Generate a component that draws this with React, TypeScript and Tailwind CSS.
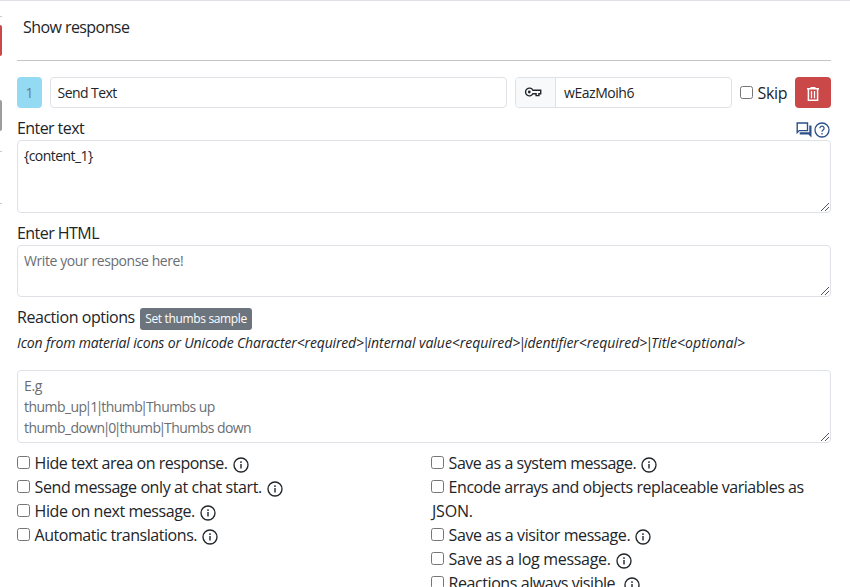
import React from "react";

function Grip() {
  return (
    <svg className="absolute right-[1px] bottom-0" width="9" height="9" viewBox="0 0 9 9" shapeRendering="crispEdges">
      <path d="M0.5 8.5L8.5 0.5M4.5 8.5L8.5 4.5" stroke="#555" strokeWidth="1" fill="none" />
    </svg>
  );
}

function Area({ className, children }: { className: string; children: React.ReactNode }) {
  return (
    <div className={`relative rounded-[4px] border border-[#dee2e6] px-[6px] text-[14px] leading-[21px] ${className}`}>
      {children}
      <Grip />
    </div>
  );
}

function Box() {
  return <span className="inline-block h-[13px] w-[13px] shrink-0 rounded-[2.5px] border border-[#767676] bg-white" />;
}

function Pipe() {
  return <span className="-mx-[2px] tracking-normal">|</span>;
}

function InfoIcon() {
  return (
    <svg className="mt-[5px] ml-[4px] shrink-0" width="18" height="18" viewBox="0 0 18 18" fill="none" stroke="currentColor">
      <circle cx="9" cy="9" r="7" strokeWidth="1.35" />
      <path d="M9 8V12.6M9 5.3V6.9" strokeWidth="1.4" />
    </svg>
  );
}

function HelpIcon() {
  return (
    <svg width="18" height="18" viewBox="0 0 18 18" fill="none" stroke="currentColor">
      <circle cx="9" cy="9" r="7" strokeWidth="1.3" />
      <path d="M6.9 7.2a2.1 2.1 0 1 1 3.5 1.5C9.6 9.3 9 9.7 9 10.8M9 12v1.4" strokeWidth="1.25" />
    </svg>
  );
}

function ForumIcon() {
  return (
    <svg width="18" height="18" viewBox="0 0 18 18" fill="none" stroke="currentColor">
      <path d="M2.2 11.6V2h10.3v7.6H4.2z" strokeWidth="1.4" />
      <path d="M14.3 4.5h2.2v12l-3-3H4.7v-2.2h9.6z" fill="currentColor" stroke="none" />
    </svg>
  );
}

function KeyIcon() {
  return (
    <svg width="18" height="18" viewBox="0 0 18 18" fill="none" stroke="currentColor">
      <path d="M8.9 7.2A3.9 3.9 0 1 0 8.9 10.8H12.1V12.6H14.9V10.8H16.7V7.2z" strokeWidth="1.4" />
      <circle cx="5.3" cy="9" r="1.4" fill="currentColor" stroke="none" />
    </svg>
  );
}

function Option({ label, spacing, info = true }: { label: string; spacing: string; info?: boolean }) {
  return (
    <div className="flex h-[24px] items-start whitespace-nowrap">
      <span className="mt-[5px] mr-[4.6px] flex"><Box /></span>
      <span className={spacing}>{label}</span>
      {info && <InfoIcon />}
    </div>
  );
}

export default function App() {
  return (
    <div className="flex h-[587px] w-[850px] overflow-hidden border-t border-[#dee2e6] bg-white font-['Open_Sans','Noto_Sans',sans-serif] text-[16px] leading-[24px] text-[#212529]">
      <div className="flex w-[2px] shrink-0 flex-col">
        <div className="mt-[15px] h-px bg-[#c8c9ca]" />
        <div className="mt-[8px] h-[31px] rounded-r-[3px] bg-[#cb4848]" />
        <div className="mt-[44px] h-[31px] rounded-r-[3px] bg-[#999da0]" />
        <div className="mt-[20px] h-px bg-[#c8c9ca]" />
        <div className="mt-[51px] h-px bg-[#c8c9ca]" />
      </div>
      <div className="ml-[15px] w-[814px] shrink-0">
        <div className="h-[60px] border-b border-[#c4c5c6] pt-[14px] pl-[6px]">
          <span className="tracking-[-0.57px]">Show response</span>
        </div>
        <div className="mt-[16px] flex h-[31px] text-[14px]">
          <div className="flex w-[25px] items-center justify-center rounded-[4px] bg-[#94daf3] pt-px text-[#687d86]">1</div>
          <div className="ml-[8px] flex w-[457px] items-center rounded-[4px] border border-[#dee2e6] pl-[6.5px]">
            <span className="tracking-[-0.55px]">Send Text</span>
          </div>
          <div className="ml-[8px] flex w-[217px] rounded-[4px] border border-[#dee2e6]">
            <div className="flex w-[40px] items-center rounded-l-[3px] border-r border-[#dee2e6] bg-[#f8f9fa] pb-px pl-[8px]">
              <KeyIcon />
            </div>
            <div className="flex items-center pl-[8px] tracking-[-0.45px]">wEazMoih6</div>
          </div>
          <div className="ml-[8px] flex w-[55px] pt-[4px] text-[16px]">
            <span className="mt-[5px] mr-[4.5px] flex"><Box /></span>
            <span className="tracking-[-0.3px]">Skip</span>
          </div>
          <div className="flex w-[36px] items-center justify-center rounded-[4px] bg-[#cb4848] pt-[2px]">
            <svg width="14" height="16" viewBox="0 0 14 16" fill="none" stroke="#fff">
              <path d="M1 2.8h12M4.5 1.6h5" strokeWidth="1.4" />
              <path d="M2.4 3v11.2h9.2V3" strokeWidth="1.5" />
              <path d="M5.5 5v7.2M8.5 5v7.2" strokeWidth="1.3" />
            </svg>
          </div>
        </div>
        <div className="mt-[8px] flex h-[24px] justify-between">
          <span className="tracking-[-0.58px]">Enter text</span>
          <span className="flex pt-[5px] text-[#2b5189]">
            <ForumIcon />
            <HelpIcon />
          </span>
        </div>
        <Area className="h-[73px] pt-[4px]"><span className="tracking-[-0.55px]">{"{content_1}"}</span></Area>
        <div className="mt-[8px] h-[24px]"><span className="tracking-[-0.55px]">Enter HTML</span></div>
        <Area className="h-[52px] pt-[4px] text-[#6a6e72]"><span className="tracking-[-0.42px]">Write your response here!</span></Area>
        <div className="mt-[8px] flex h-[26px]">
          <span className="tracking-[-0.45px]">Reaction options</span>
          <span className="mt-[3px] ml-[5.3px] flex h-[22px] w-[112px] items-center justify-center rounded-[3px] bg-[#6c757d] text-[12px] tracking-[-0.35px] whitespace-nowrap text-white">Set thumbs sample</span>
        </div>
        <div className="h-[39px] text-[14px] whitespace-nowrap italic">
          <span className="tracking-[-0.16px]">{"Icon from material icons or Unicode Character<required>"}</span>
          <Pipe />
          <span className="tracking-[-0.04px]">{"internal value<required>"}</span>
          <Pipe />
          <span className="tracking-[-0.03px]">{"identifier<required>"}</span>
          <Pipe />
          <span className="tracking-[0.06px]">{"Title<optional>"}</span>
        </div>
        <Area className="h-[73px] pt-[4px] text-[#6a6e72]">
          <div className="tracking-[-0.3px]">E.g</div>
          <div className="tracking-[-0.56px]">thumb_up<Pipe />1<Pipe />thumb<Pipe />Thumbs up</div>
          <div className="tracking-[-0.56px]">thumb_down<Pipe />0<Pipe />thumb<Pipe />Thumbs down</div>
        </Area>
        <div className="mt-[8px] grid grid-cols-[414px_400px]">
          <div>
            <Option label="Hide text area on response." spacing="tracking-[-0.48px]" />
            <Option label="Send message only at chat start." spacing="tracking-[-0.42px]" />
            <Option label="Hide on next message." spacing="tracking-[-0.43px]" />
            <Option label="Automatic translations." spacing="tracking-[-0.46px]" />
          </div>
          <div>
            <Option label="Save as a system message." spacing="tracking-[-0.46px]" />
            <Option label="Encode arrays and objects replaceable variables as" spacing="tracking-[-0.46px]" info={false} />
            <div className="h-[24px] pl-[1px] tracking-[-0.2px]">JSON.</div>
            <Option label="Save as a visitor message." spacing="tracking-[-0.4px]" />
            <Option label="Save as a log message." spacing="tracking-[-0.31px]" />
            <Option label="Reactions always visible." spacing="tracking-[-0.43px]" />
          </div>
        </div>
      </div>
    </div>
  );
}
